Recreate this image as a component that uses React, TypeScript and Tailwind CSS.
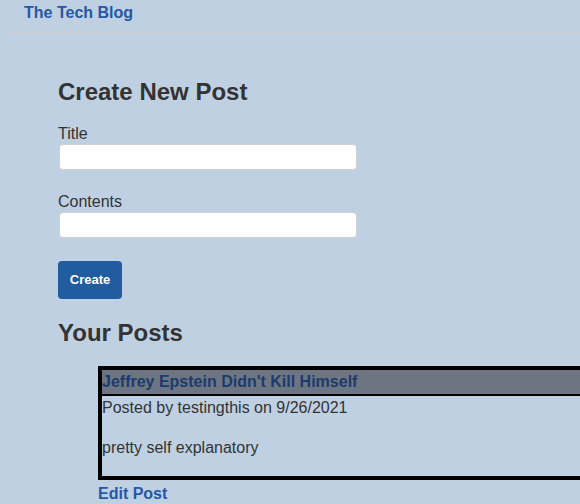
import React from "react";

export default function App() {
  return (
    <div className="min-h-screen w-[580px] overflow-hidden bg-[#bfd0e2] text-[#333333] font-['Liberation_Sans',Arial,sans-serif] text-[16px]">
      <header className="ml-[10px] h-[33px] border-b border-[#d3d0c9] pt-px">
        <a href="#" className="ml-[14px] block leading-6 font-bold text-[#2458a6]">
          The Tech Blog
        </a>
      </header>
      <main className="pl-[58px]">
        <h2 className="mt-[45px] text-[24px] leading-[28px] font-bold">Create New Post</h2>
        <label className="mt-[18px] block pt-px leading-[18px]">Title</label>
        <input className="ml-px mt-px block h-[26px] w-[298px] rounded-[4px] border border-[#d0d0d0] bg-white" />
        <label className="mt-[22px] block pt-px leading-[18px]">Contents</label>
        <input className="ml-px mt-px block h-[26px] w-[298px] rounded-[4px] border border-[#d0d0d0] bg-white" />
        <button className="mt-[23px] block h-[38px] w-[64px] rounded-[4px] bg-[#215ba0] text-[13px] font-bold text-white">
          Create
        </button>
        <h2 className="mt-[20px] text-[24px] leading-[28px] font-bold">Your Posts</h2>
        <div className="ml-[40px] mt-[19px] w-[540px] border-4 border-black">
          <div className="border-b-2 border-black bg-[#6e7582] leading-6 font-bold text-[#1c3b6d]">
            Jeffrey Epstein Didn't Kill Himself
          </div>
          <p className="leading-6">Posted by testingthis on 9/26/2021</p>
          <p className="my-4 leading-6">pretty self explanatory</p>
        </div>
        <a href="#" className="ml-[40px] mt-[2px] block leading-6 font-bold text-[#2458a6]">
          Edit Post
        </a>
      </main>
    </div>
  );
}
